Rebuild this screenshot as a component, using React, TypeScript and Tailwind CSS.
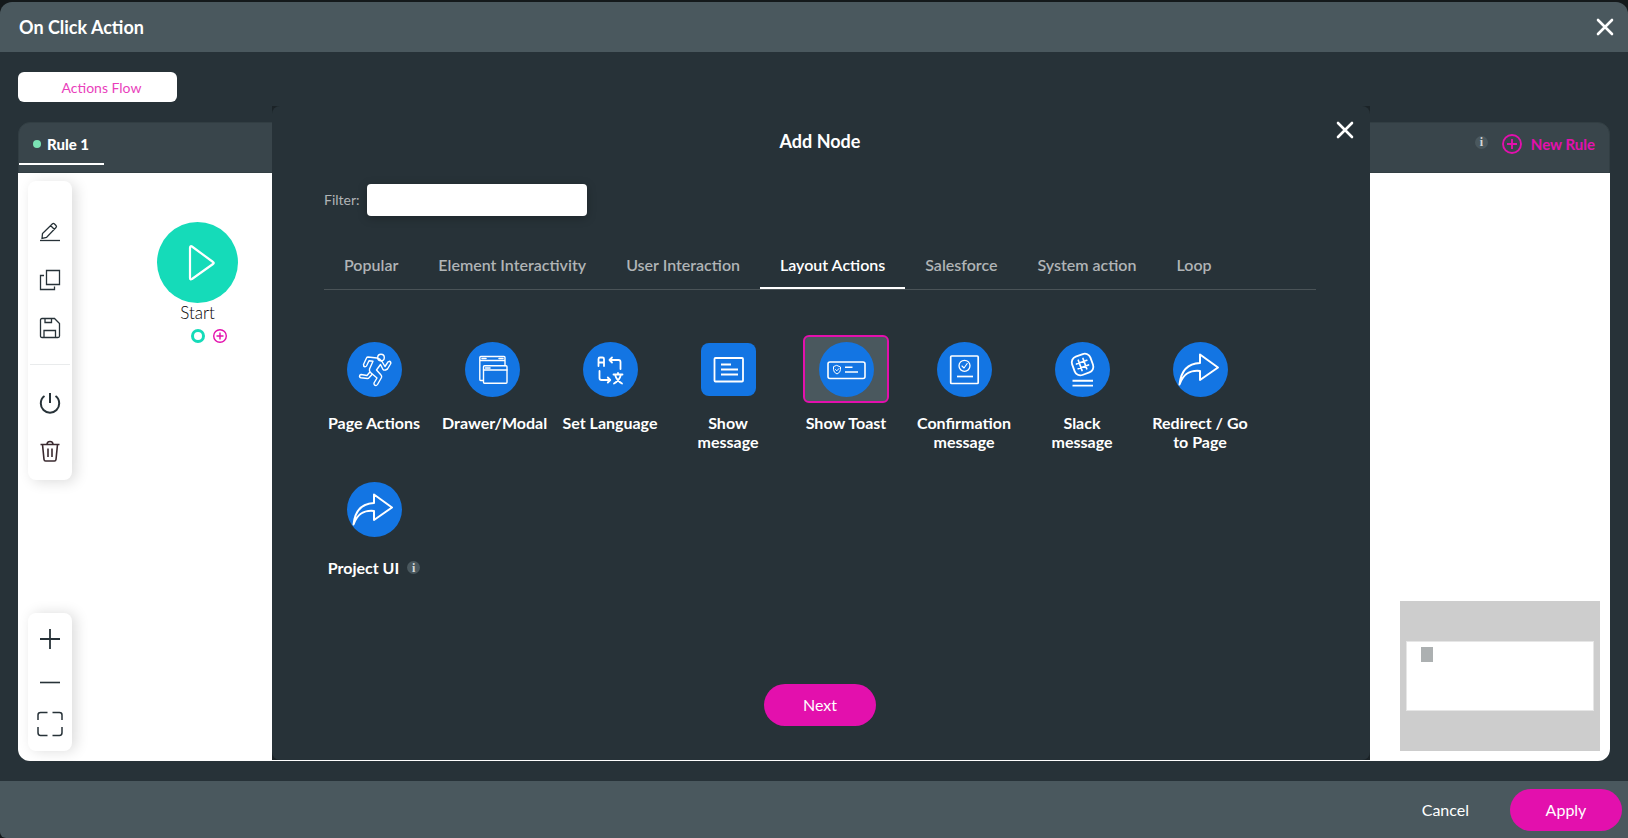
import { useState } from "react";
import type { ReactNode } from "react";
import clsx from "clsx";

type NodeItem = {
  label: string;
  icon: ReactNode;
  square?: boolean;
  info?: boolean;
};

const tabs = [
  "Popular",
  "Element Interactivity",
  "User Interaction",
  "Layout Actions",
  "Salesforce",
  "System action",
  "Loop",
];

const redirectIcon = (
  <path d="M6.5 42.5C8 28 15 21.5 27 21V12.5L45 25.5L27 38V29C17 28 10.5 31.5 6.5 42.5Z" strokeWidth="2" />
);

const nodes: NodeItem[] = [
  {
    label: "Page Actions",
    icon: (
      <g strokeWidth="1.4">
        <circle cx="34" cy="15.5" r="3.3" />
        <path d="M30 16L21 15Q20 15 19.500 16L16.500 22.500Q16.300 24.500 18 24.800Q19 24.800 19.500 24L22 18.800L26 19.300L22.500 27Q22 29 23.500 30.500L30 36L27 41Q26.800 43.500 29 43.500Q30 43.300 30.500 42.500L34.500 35.500Q35 34 34 33L29.500 28L33.500 22.500L36 27.500Q37 28.500 38.500 28L40.500 27L43.800 21.500Q44 19.500 42.300 19.300L41 19.800L38 24.500L35 19.500Q33 16.800 30 16Z" />
        <path d="M22.500 30.500L20 33.500L14 32.500Q12.300 33 12.500 34.500Q12.800 35.500 14 35.800L20.500 36.500Q21.500 36.500 22 35.800L25 32.500" />
      </g>
    ),
  },
  {
    label: "Drawer/Modal",
    icon: (
      <g strokeWidth="1.4">
        <path d="M18 38.500H15.500Q14.800 38.500 14.800 37.500V15.500Q14.800 14.500 15.800 14.500H39Q40 14.500 40 15.500V23.500M14.800 18.500H40" />
        <path d="M17 16.500H21M34 16.500H38" strokeWidth="1.500" strokeDasharray="1.200 0.600" />
        <rect x="18.500" y="23.800" width="23.500" height="17.500" rx="1" />
        <path d="M18.500 28H42" />
        <path d="M20.500 26H25" strokeWidth="1.500" strokeDasharray="1.200 0.600" />
      </g>
    ),
  },
  {
    label: "Set Language",
    icon: (
      <g strokeWidth="1.800">
        <path d="M15.500 24V17Q15.500 15.500 17 15.500H19.500Q21 15.500 21 17V24M15.500 20.500H21" />
        <path d="M37.500 27V20Q37.500 18 35.500 18H26.500M29 15.500L26.500 18L29 20.500" />
        <path d="M16.500 29V36Q16.500 38 18.500 38H27M24.800 35.500L27.300 38L24.800 40.500" />
        <path d="M30.500 32.500H39.500M35 31V32.500M38 32.500Q36.500 38.500 31 41.500M32 32.500Q33.500 38.500 39 41.500" />
      </g>
    ),
  },
  {
    label: "Show message",
    square: true,
    icon: (
      <g strokeWidth="1.800">
        <rect x="13.500" y="16" width="28.500" height="23.500" rx="1" />
        <path d="M20 22.500H30M20 27.500H37M20 32.500H37" strokeLinecap="butt" />
      </g>
    ),
  },
  {
    label: "Show Toast",
    icon: (
      <g strokeWidth="1.600">
        <rect x="9" y="20" width="37" height="16.500" rx="2" />
        <path d="M26 25.200H33.500M26 30H39" strokeLinecap="butt" />
        <path d="M18 23.500L21.500 25V27.500Q21.500 30.500 18 32Q14.500 30.500 14.500 27.500V25ZM16.500 27.500L17.800 28.800L20 26.500" strokeWidth="1" />
      </g>
    ),
  },
  {
    label: "Confirmation message",
    icon: (
      <g strokeWidth="1.700">
        <rect x="13.700" y="14" width="27.500" height="27.500" rx="1" />
        <circle cx="27.500" cy="23.800" r="5.500" strokeWidth="1.300" />
        <path d="M25 24L27 26L30.200 21.500" strokeWidth="1.100" />
        <path d="M20 34.500H36" strokeLinecap="butt" />
      </g>
    ),
  },
  {
    label: "Slack message",
    icon: (
      <g strokeWidth="1.800">
        <g transform="rotate(-20 27.500 22.500)">
          <rect x="17.800" y="12.800" width="19.500" height="19.500" rx="6" />
          <path d="M25 17V28M30 17V28M22 20H33M22 25H33" strokeWidth="1.700" />
        </g>
        <path d="M17.500 38.800H38M17.500 43.600H38" strokeWidth="1.900" strokeLinecap="butt" />
      </g>
    ),
  },
  { label: "Redirect / Go to Page", icon: redirectIcon },
  { label: "Project UI", icon: redirectIcon, info: true },
];

function CloseIcon() {
  return (
    <svg width="18" height="18" viewBox="0 0 18 18" fill="none" stroke="currentColor" strokeWidth="2.600" strokeLinecap="round">
      <path d="M2 2L16 16M16 2L2 16" />
    </svg>
  );
}

function InfoBadge() {
  return (
    <span className="flex size-[13px] items-center justify-center rounded-full bg-[#4a585e] font-['Liberation_Serif',serif] text-xs leading-3 font-bold text-[#d5d8da]">
      i
    </span>
  );
}

function ToolButton({ label, children }: { label: string; children: ReactNode }) {
  return (
    <button type="button" aria-label={label} className="flex size-6 items-center justify-center text-[#273238]">
      <svg width="24" height="24" viewBox="0 0 24 24" fill="none" stroke="currentColor" strokeWidth="1.300">
        {children}
      </svg>
    </button>
  );
}

function NodeCard({ item, selected, onSelect }: { item: NodeItem; selected: boolean; onSelect: () => void }) {
  return (
    <button type="button" onClick={onSelect} aria-pressed={selected} className="flex w-[118px] flex-col items-center self-start">
      <span
        className={clsx(
          "flex h-[68px] w-[86px] items-center justify-center rounded-md border-2",
          selected ? "border-[#e310ad] bg-[#4a585e]" : "border-transparent"
        )}
      >
        <svg width="55" height="55" viewBox="0 0 55 55" fill="none" stroke="#fff" strokeLinecap="round" strokeLinejoin="round">
          {item.square ? (
            <rect y="1" width="55" height="53" rx="8" fill="#1375e3" stroke="none" />
          ) : (
            <circle cx="27.500" cy="27.500" r="27.500" fill="#1375e3" stroke="none" />
          )}
          {item.icon}
        </svg>
      </span>
      <span
        className={clsx(
          "flex items-center gap-2 text-base leading-[19px] font-bold",
          item.info ? "mt-[15px]" : "mt-2.5 max-w-[100px]"
        )}
      >
        {item.label}
        {item.info && <InfoBadge />}
      </span>
    </button>
  );
}

function AddNodeDialog() {
  const [activeTab, setActiveTab] = useState("Layout Actions");
  const [selected, setSelected] = useState("Show Toast");

  return (
    <div className="absolute -top-4 right-[240px] bottom-px left-[254px] bg-[#1b2327]">
      <section role="dialog" aria-label="Add Node" className="relative flex h-full flex-col rounded-lg bg-[#273238] pt-[23px] pr-[54px] pb-[34px] pl-[52px]">
        <button type="button" aria-label="Close" className="absolute top-[15px] right-4">
          <CloseIcon />
        </button>
        <h2 className="text-center text-lg leading-6 font-bold">Add Node</h2>

        <div className="mt-[31px] flex items-center gap-[7px]">
          <label htmlFor="filter" className="text-sm text-[#b0b4b6]">
            Filter:
          </label>
          <input id="filter" type="text" className="h-8 w-[220px] rounded bg-white px-2 text-sm text-[#273238] shadow-[0_2px_10px_rgba(0,0,0,0.25)] outline-none" />
        </div>

        <div role="tablist" className="mt-7 flex border-b border-[#4a5357]">
          {tabs.map((tab) => (
            <button
              key={tab}
              type="button"
              role="tab"
              aria-selected={tab === activeTab}
              onClick={() => setActiveTab(tab)}
              className={clsx(
                "h-[45px] border-b-2 px-5 pb-px text-base font-semibold",
                tab === activeTab ? "border-white text-white" : "border-transparent text-[#b0b4b6]"
              )}
            >
              {tab}
            </button>
          ))}
        </div>

        <div className="-ml-[9px] mt-[45px] flex flex-wrap gap-y-6">
          {nodes.map((item) => (
            <NodeCard key={item.label} item={item} selected={item.label === selected} onSelect={() => setSelected(item.label)} />
          ))}
        </div>

        <button type="button" className="mx-auto mt-auto h-[42px] w-28 rounded-full bg-[#e310ad] text-base">
          Next
        </button>
      </section>
    </div>
  );
}

function Canvas() {
  return (
    <div className="flex flex-1 justify-between rounded-b-xl bg-white p-2.5 pt-2">
      <div className="flex gap-[85px]">
        <div className="flex flex-col justify-between">
          <div className="flex h-[299px] w-11 flex-col items-center rounded-lg bg-white pt-[39px] shadow-[4px_2px_14px_rgba(0,0,0,0.14)]">
            <div className="flex flex-col gap-6">
              <ToolButton label="Edit">
                <path d="M4 18.500L4.500 13.500L14.500 3.800Q15.500 3 16.500 4L18 5.500Q19 6.500 18 7.500L8.500 17.500ZM12.500 5.500L16.500 9.500" />
                <path d="M2 20.500H22" />
              </ToolButton>
              <ToolButton label="Duplicate">
                <path d="M8.500 2.500H21.500V16.500H8.500ZM6 7.500H2.500V21.500H16.500V18.500" />
              </ToolButton>
              <ToolButton label="Save">
                <path d="M4 2.500H16.500L21.500 7.500V20Q21.500 21.500 20 21.500H4Q2.500 21.500 2.500 20V4Q2.500 2.500 4 2.500ZM7 2.500V6.500H13.500V2.500M6 21.500V14.500H17.500V21.500" />
              </ToolButton>
            </div>
            <hr className="mt-6 w-10 border-[#e9ebec]" />
            <div className="mt-[26px] flex flex-col gap-6">
              <ToolButton label="Disable">
                <path d="M12 2V12M6.500 5Q2.800 7.500 2.800 12.500A9.200 9.200 0 0 0 21.200 12.500Q21.200 7.500 17.500 5" strokeWidth="2" />
              </ToolButton>
              <ToolButton label="Delete">
                <path d="M2.500 5.500H21.500M4.500 5.500L6 20.500Q6.200 22 7.500 22H16.500Q17.800 22 18 20.500L19.500 5.500M9 5.500Q9 2.500 12 2.500Q15 2.500 15 5.500M10 9.500V18M14 9.500V18" stroke="#3a2a2f" strokeWidth="1.600" />
              </ToolButton>
            </div>
          </div>
          <div className="flex h-[138px] w-11 flex-col items-center rounded-lg bg-white pt-3.5 shadow-[4px_0_14px_rgba(0,0,0,0.14)]">
            <ToolButton label="Zoom in">
              <path d="M12 2V22M2 12H22" strokeWidth="1.800" />
            </ToolButton>
            <div className="mt-5 mb-4">
              <ToolButton label="Zoom out">
                <path d="M2 11.500H22" strokeWidth="1.600" />
              </ToolButton>
            </div>
            <button type="button" aria-label="Fit to screen" className="text-[#273238]">
              <svg width="26" height="26" viewBox="0 0 26 26" fill="none" stroke="currentColor" strokeWidth="1.500">
                <path d="M1 9V4Q1 1.500 3.500 1.500H10.500M15.500 1.500H22.500Q25 1.500 25 4V9M25 16V21.500Q25 24.500 22.500 24.500H15.500M10.500 24.500H3.500Q1 24.500 1 21.500V16" />
              </svg>
            </button>
          </div>
        </div>

        <div className="mt-[41px] flex w-[81px] flex-col items-center self-start">
          <svg width="81" height="81" viewBox="0 0 81 81" fill="none">
            <circle cx="40.500" cy="40.500" r="40.500" fill="#15dbb9" />
            <path d="M33 26V56Q33 58 35 57L56 42Q57.500 41 56 40L35 24.500Q33 23.500 33 26Z" stroke="#fff" strokeWidth="2.200" />
          </svg>
          <span className="text-[17px] leading-5 font-light text-black">Start</span>
          <div className="mt-1.5 ml-[22px] flex gap-2">
            <span className="size-3.5 rounded-full border-[3px] border-[#15dbb9]" />
            <button type="button" aria-label="Add next node" className="text-[#e310ad]">
              <svg width="14" height="14" viewBox="0 0 14 14" fill="none" stroke="currentColor" strokeWidth="1.400">
                <circle cx="7" cy="7" r="6.300" />
                <path d="M7 3.500V10.500M3.500 7H10.500" />
              </svg>
            </button>
          </div>
        </div>
      </div>

      <div className="h-[150px] w-[200px] self-end bg-[#cdcdcd] px-1.5 pt-10">
        <div className="h-[70px] border border-[#e6e6e6] bg-white pt-[5px] pl-3.5">
          <div className="h-[15px] w-3 bg-[#acb0b1]" />
        </div>
      </div>
    </div>
  );
}

export default function App() {
  return (
    <div className="flex min-h-screen flex-col bg-[#14191b] pt-0.5 font-[Lato,sans-serif] text-white">
      <header className="flex h-[50px] items-center justify-between rounded-t-xl bg-[#4a585e] pr-3.5 pl-[19px]">
        <h1 className="text-lg font-bold">On Click Action</h1>
        <button type="button" aria-label="Close">
          <CloseIcon />
        </button>
      </header>

      <main className="flex flex-1 flex-col bg-[#273238] px-[18px] py-5">
        <button type="button" className="h-[30px] w-[159px] self-start rounded-md bg-white pt-0.5 pl-2 text-sm text-[#e93fbc]">
          Actions Flow
        </button>

        <div className="relative mt-5 flex flex-1 flex-col">
          <div className="flex h-[51px] items-start justify-between rounded-t-xl border border-[#323e43] bg-[#39454b] pr-3.5">
            <button type="button" className="flex h-[42px] w-[85px] items-center gap-1.5 border-b-2 border-white pt-0.5 pl-3.5 text-[15px] font-black">
              <span className="size-2 rounded-full bg-[#7be3b4]" />
              Rule 1
            </button>
            <div className="flex h-[42px] items-center gap-3.5">
              <span className="mb-1">
                <InfoBadge />
              </span>
              <button type="button" className="flex items-center gap-[9px] text-[15px] font-bold text-[#e310ad]">
                <svg width="20" height="20" viewBox="0 0 20 20" fill="none" stroke="currentColor" strokeWidth="1.900">
                  <circle cx="10" cy="10" r="9" />
                  <path d="M10 5V15M5 10H15" />
                </svg>
                New Rule
              </button>
            </div>
          </div>
          <Canvas />
          <AddNodeDialog />
        </div>
      </main>

      <footer className="flex h-[57px] items-center justify-end gap-[41px] rounded-bl-md bg-[#4a585e] pr-1.5 text-base">
        <button type="button">Cancel</button>
        <button type="button" className="h-[42px] w-28 rounded-full bg-[#e310ad]">
          Apply
        </button>
      </footer>
    </div>
  );
}
